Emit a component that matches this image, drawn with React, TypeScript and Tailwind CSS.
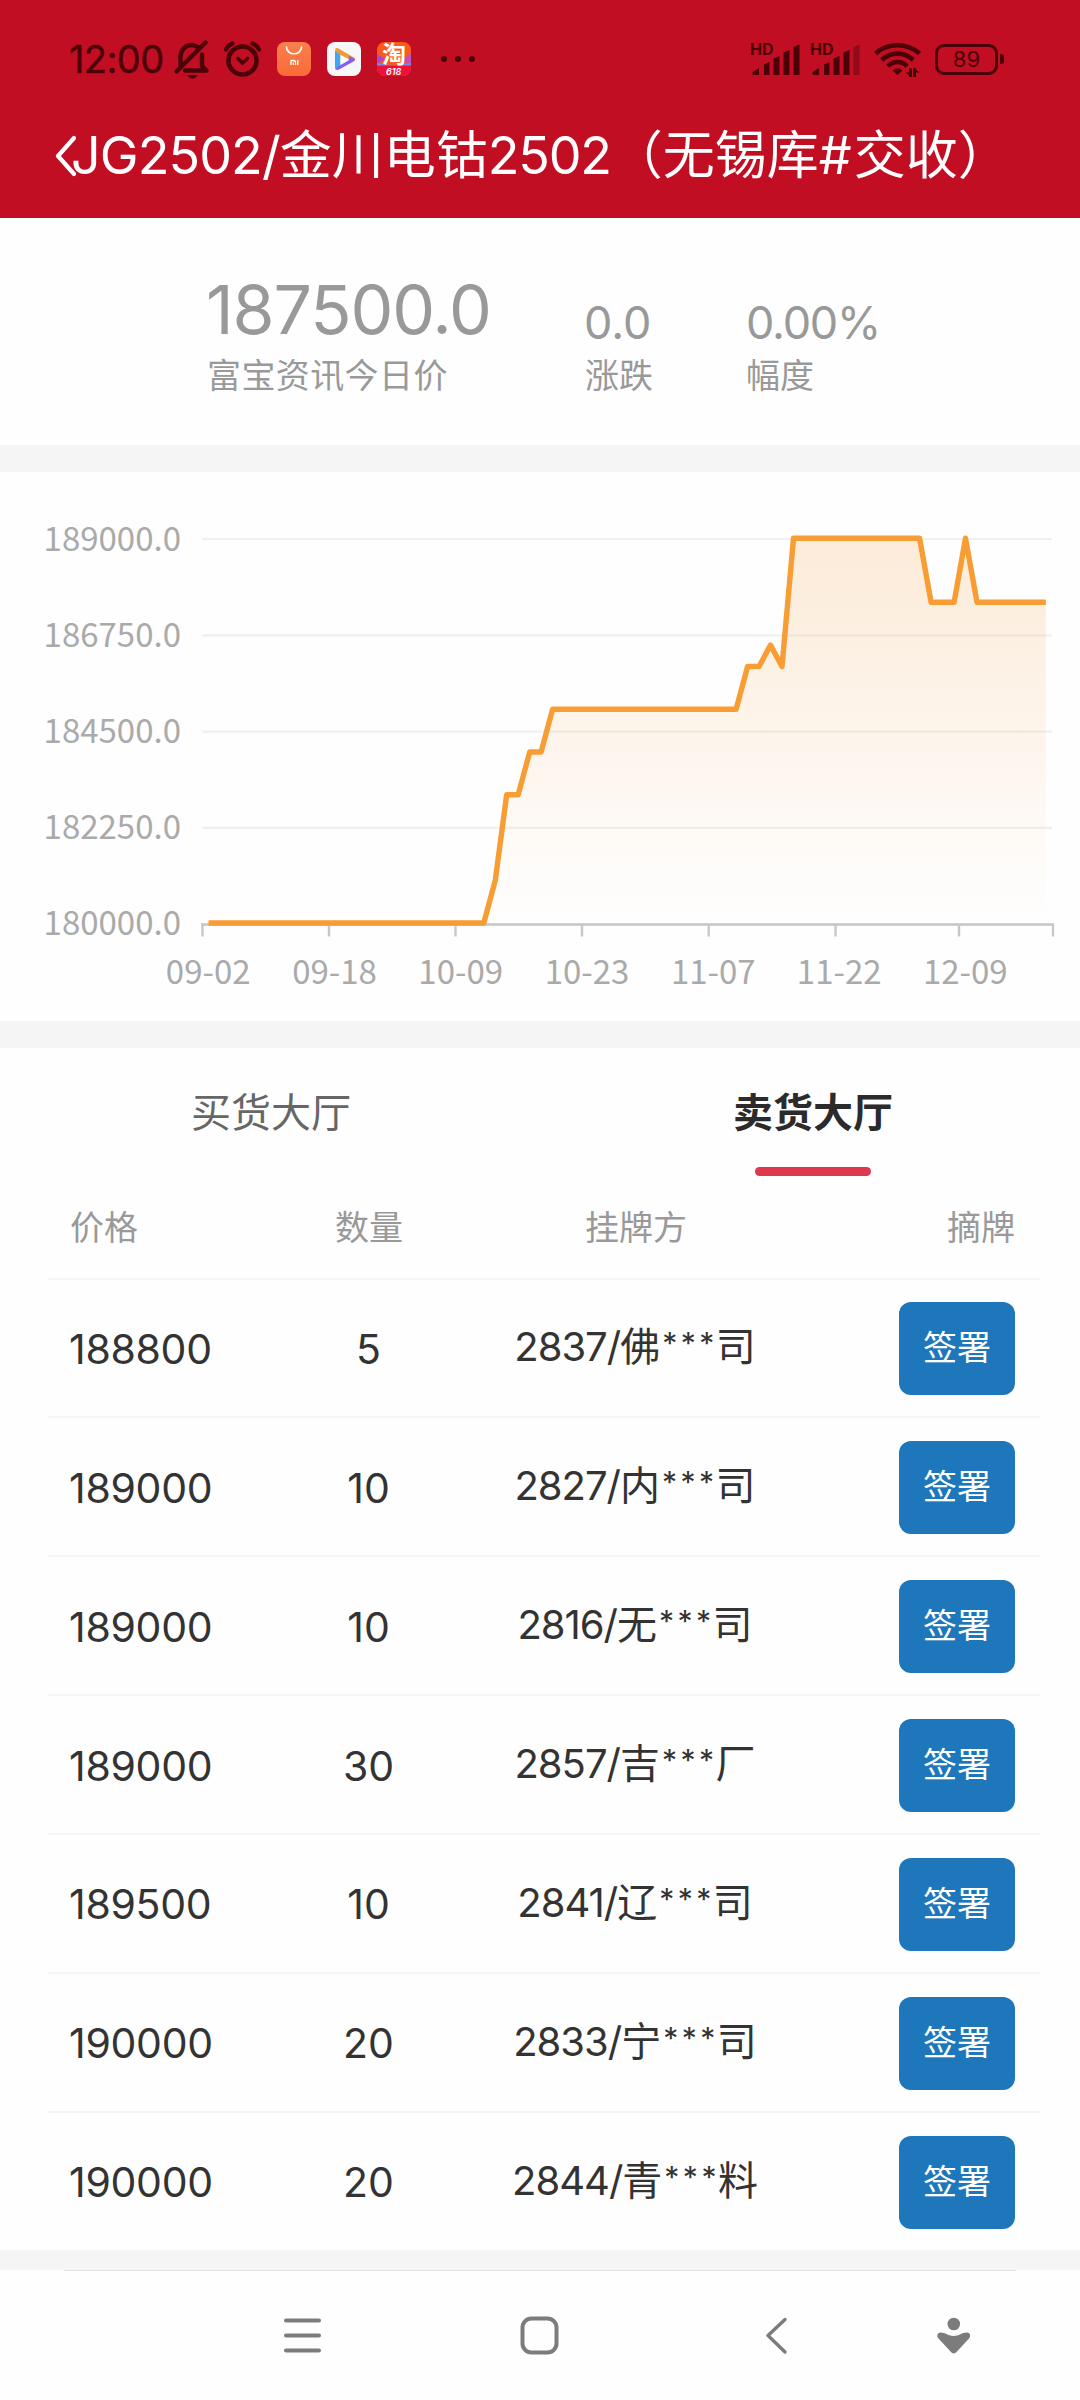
const INK = '#4a0208';

function StatusBar() {
  return (
    <div className="flex h-[118px] items-start justify-between pl-[69px] pr-[76px] pt-[34px] text-[#4a0208]">
      <div className="flex h-[50px] items-center">
        <span className="w-[101px] text-[38px] leading-[50px] tracking-[-0.6px] [-webkit-text-stroke:0.4px_#4a0208]">12:00</span>
        <svg width="44" height="40" viewBox="0 0 44 40" fill="none" stroke={INK} strokeWidth="4.4" strokeLinecap="round" strokeLinejoin="round">
          <path d="M10.5 26.5V18C10.5 11 15.5 6 21.500 6C24 6 26.500 7 28.500 8.500" />
          <path d="M32 15.500V27L36.500 31.500H15" />
          <path d="M6.500 32.500L35.500 3.500" />
          <path d="M17.500 36H27.500C26.500 38.500 24.500 39.500 22.500 39.500C20.500 39.500 18.500 38.500 17.500 36Z" fill={INK} stroke="none" />
        </svg>
        <svg className="ml-[8px]" width="42" height="40" viewBox="0 0 42 40" fill="none" stroke={INK} strokeLinecap="round" strokeLinejoin="round">
          <circle cx="20.500" cy="21.500" r="14" strokeWidth="4.600" />
          <path d="M16 19.500L20.500 24L25.500 19.500" strokeWidth="3.600" />
          <path d="M4 10.500C5.200 7.800 7.500 5.700 10.500 4.500" strokeWidth="4.200" />
          <path d="M37 10.500C35.800 7.800 33.500 5.700 30.500 4.500" strokeWidth="4.200" />
        </svg>
        <svg className="ml-[13px]" width="34" height="34" viewBox="0 0 34 34" fill="none">
          <defs>
            <linearGradient id="mi" x1="0" y1="0" x2="0" y2="1">
              <stop offset="0" stopColor="#f8804e" />
              <stop offset="1" stopColor="#fb6a35" />
            </linearGradient>
          </defs>
          <rect width="34" height="34" rx="8" fill="url(#mi)" />
          <path d="M9.500 5C9.500 14 24.500 14 24.500 5" stroke="#fff" strokeWidth="1.700" strokeLinecap="round" />
          <path d="M14 23V18.500H16.500Q18.500 18.500 18.500 20.500V23M16.300 20.500V23M20.800 18V23" stroke="#fff" strokeWidth="1.300" />
        </svg>
        <svg className="ml-[16px]" width="34" height="34" viewBox="0 0 34 34">
          <rect width="34" height="34" rx="8" fill="#f7f6f8" />
          <path d="M8 8.500Q8 5 11.500 6.500L27 15.500Q29 17 27.500 18.500L24 18L8.500 11Z" fill="#f29a35" />
          <path d="M8 9L13.500 13V25.500L10.500 28Q8 28.500 8 25.500Z" fill="#41a7ee" />
          <path d="M28 17Q28 18.500 26.500 19.500L12 27.500Q9 28.500 9.500 25.500L21.500 18.500L22 14Z" fill="#8c5cf0" />
          <path d="M13.500 13L21.500 17.500L13.500 22Z" fill="#fff" />
        </svg>
        <div className="relative ml-[16px] h-[34px] w-[34px]">
          <svg className="absolute inset-0" width="34" height="34" viewBox="0 0 34 34">
            <defs>
              <clipPath id="tao">
                <rect width="34" height="34" rx="8" />
              </clipPath>
            </defs>
            <g clipPath="url(#tao)">
              <rect width="34" height="34" fill="#fb5a1c" />
              <path d="M0 12L8 17L0 22Z" fill="#a54bd0" />
              <path d="M34 11L25 18L34 23Z" fill="#c04fc0" />
              <path d="M0 21Q17 25 34 21V24H0Z" fill="#6f8df0" />
              <rect y="23.500" width="34" height="11" fill="#f0103c" />
            </g>
          </svg>
          <span className="absolute left-[5px] top-0 text-[24px] font-bold leading-[25px] text-white">淘</span>
          <span className="absolute left-[9px] top-[24px] text-[9px] font-semibold italic leading-[11px] text-white">618</span>
        </div>
        <svg className="ml-[29px]" width="36" height="8" viewBox="0 0 36 8" fill={INK}>
          <circle cx="4" cy="4" r="3" />
          <circle cx="18" cy="4" r="3" />
          <circle cx="32" cy="4" r="3" />
        </svg>
      </div>

      <div className="flex h-[50px] items-center">
        <Signal full />
        <div className="w-[9px]" />
        <Signal />
        <svg className="ml-[13px]" width="48" height="36" viewBox="0 0 48 36" fill="none" stroke={INK} strokeWidth="4.600">
          <path d="M1.500 12.500C13.500 1.500 33.500 1.500 45.500 12.500" />
          <path d="M7.700 19C16.500 10.500 30.500 10.500 39.300 19" />
          <path d="M13.800 25.300C19 19.500 28 19.500 33.200 25.300" />
          <path d="M18.500 29.500Q23.500 25 28.500 29.500L23.500 34Z" fill={INK} stroke="none" />
          <path d="M36.500 27V36M40.500 36V27" strokeWidth="3" />
          <path d="M31.500 31.500H37V36ZM45.500 31.500H40V27Z" fill={INK} stroke="none" />
        </svg>
        <div className="ml-[13px] flex h-[31px] w-[63px] items-center justify-center rounded-[9px] border-[3.5px] border-[#4a0208] pb-px text-[22px] leading-none">
          89
        </div>
        <div className="ml-[2px] h-[10px] w-[4px] rounded-r-[3px] bg-[#4a0208]" />
      </div>
    </div>
  );
}

function Signal({ full = false }: { full?: boolean }) {
  return (
    <div className="relative h-[34px] w-[51px]">
      <span className="absolute left-0 top-0 text-[16px] font-bold leading-[14px]">HD</span>
      <svg className="absolute inset-0" width="51" height="34" viewBox="0 0 51 34" fill={INK}>
        <path d="M2.500 30L9 26V33H4Q2.500 33 2.500 31.500Z" />
        <path d="M14 22.500L19.500 20V33H14Z" />
        <path d="M23.500 16.500L29.500 14V33H23.500Z" />
        <path d="M33.500 10.500L39.500 8V33H33.500Z" />
        <path d="M43.500 5L49.500 2.500V33H43.500Z" opacity={full ? 1 : 0.4} />
      </svg>
    </div>
  );
}

function TitleBar() {
  return (
    <div className="flex h-[100px] items-center pb-[25px] pl-[54px] text-white">
      <svg width="22" height="42" viewBox="0 0 22 42" fill="none" stroke="#fff" strokeWidth="4.200" strokeLinecap="round" strokeLinejoin="round">
        <path d="M20 3L4 21L20 39" />
      </svg>
      <h1 className="-ml-[5px] whitespace-nowrap text-[52px] font-normal leading-[72px]">
        <span className="tracking-[-0.9px]">JG2502/</span>金川电钴<span className="tracking-[-1.2px]">2502</span>（无锡库<span className="tracking-[2px]">#</span>交收）
      </h1>
    </div>
  );
}

function Summary() {
  return (
    <section className="flex h-[227px] items-end pb-[51px] pl-[207px] text-[#999]">
      <div className="w-[378px]">
        <div className="-ml-[1px] text-[68px] leading-[72px] tracking-[-1.1px]">187500.0</div>
        <div className="mt-[13px] text-[34px] leading-[36px] tracking-[0.4px]">富宝资讯今日价</div>
      </div>
      <div className="w-[161px]">
        <div className="-ml-px text-[45px] leading-[50px]">0.0</div>
        <div className="mt-[10px] text-[34px] leading-[36px]">涨跌</div>
      </div>
      <div>
        <div className="text-[45px] leading-[50px] tracking-[-1.2px]">0.00%</div>
        <div className="mt-[10px] text-[34px] leading-[36px]">幅度</div>
      </div>
    </section>
  );
}

/* Runs of [price, number of trading days] */
const runs: [number, number][] = [
  [180000, 25], [181000, 1], [183000, 2], [184000, 2], [185000, 17],
  [186000, 2], [186500, 1], [186000, 1], [189000, 12], [187500, 3],
  [189000, 1], [187500, 7],
];
const prices = runs.flatMap(([v, n]) => Array.from({ length: n }, () => v));
const X0 = 208.5;
const STEP = 11.47;
const TOP = 472;
const yOf = (v: number) => 923 - TOP - ((v - 180000) / 9000) * 384.8;
const line = prices.map((v, i) => `${i ? 'L' : 'M'}${(X0 + i * STEP).toFixed(1)} ${yOf(v).toFixed(1)}`).join('');
const lastX = X0 + (prices.length - 1) * STEP;
const yLabels = ['189000.0', '186750.0', '184500.0', '182250.0', '180000.0'];
const xLabels: [string, number][] = [
  ['09-02', 208.2], ['09-18', 334.5], ['10-09', 460.7], ['10-23', 587],
  ['11-07', 713.3], ['11-22', 839.2], ['12-09', 965.3],
];
const ticks = [202.5, 329, 455.5, 582, 708.7, 835.5, 959, 1053];

function Chart() {
  return (
    <svg className="block" width="1080" height="549" viewBox="0 0 1080 549" fontFamily='"Noto Sans CJK SC", sans-serif' fontSize="33" fill="#aaa">
      <defs>
        <linearGradient id="area" gradientUnits="userSpaceOnUse" x1="0" y1="66" x2="0" y2="451">
          <stop offset="0" stopColor="#f49a38" stopOpacity="0.19" />
          <stop offset="1" stopColor="#f49a38" stopOpacity="0" />
        </linearGradient>
      </defs>
      {yLabels.map((t, i) => (
        <g key={t}>
          <text x="181" y={78.5 + i * 96.2} textAnchor="end">{t}</text>
          {i < 4 && <path d={`M202 ${67 + i * 96.3}H1052`} stroke="#f0f0f0" strokeWidth="2.200" />}
        </g>
      ))}
      <path d={`${line}L${lastX} 452L${X0} 452Z`} fill="url(#area)" />
      <path d="M201 452.500H1054" stroke="#c4c4c4" strokeWidth="2.600" />
      {ticks.map((x) => (
        <path key={x} d={`M${x} 452V464.500`} stroke="#c8c8c8" strokeWidth="2.400" />
      ))}
      <path d={line} fill="none" stroke="#f89c34" strokeWidth="5.400" strokeLinejoin="round" />
      {xLabels.map(([t, x]) => (
        <text key={t} x={x} y="512" textAnchor="middle">{t}</text>
      ))}
    </svg>
  );
}

/* [price, quantity, member number, first and last character of the company] */
const orders = [
  ['188800', '5', '2837', '佛', '司'],
  ['189000', '10', '2827', '内', '司'],
  ['189000', '10', '2816', '无', '司'],
  ['189000', '30', '2857', '吉', '厂'],
  ['189500', '10', '2841', '辽', '司'],
  ['190000', '20', '2833', '宁', '司'],
  ['190000', '20', '2844', '青', '料'],
];

function Market() {
  return (
    <section className="h-[1202px] bg-[#fefefe]">
      <div className="grid h-[128px] grid-cols-[542px_542px] pt-[41px] text-center text-[40px] leading-[48px]">
        <div className="text-[#666]">买货大厅</div>
        <div className="flex flex-col items-center font-bold text-[#2b2b2b]">
          卖货大厅
          <span className="mt-[30px] h-[9px] w-[116px] rounded-full bg-[#dd384e]" />
        </div>
      </div>
      <div className="pl-[48px] pr-[40px]">
        <div className="grid h-[101.5px] grid-cols-[155px_288px_246px_1fr] items-start pl-[22px] pr-[25px] pt-[32px] text-[34px] leading-[40px] text-[#999]">
          <span>价格</span>
          <span className="text-center">数量</span>
          <span className="text-center">挂牌方</span>
          <span className="text-right">摘牌</span>
        </div>
        {orders.map(([price, qty, member, head, tail], i) => (
          <div key={i} className="grid h-[138.860px] grid-cols-[155px_288px_246px_1fr] items-center whitespace-nowrap border-t-2 border-[#f5f5f5] pl-[21px] pr-[25px] pt-[2px] text-[41px] leading-[50px] text-[#333]">
            <span className="tracking-[-0.3px]">{price}</span>
            <span className="pl-px text-center">{qty}</span>
            <span className="text-center text-[40px]">
              <span className="tracking-[-1px]">{member}/</span>{head}
              <span className="relative -top-[7px] left-[2px] text-[30px] tracking-[3.5px]">***</span>{tail}
            </span>
            <button className="h-[93px] w-[116px] justify-self-end rounded-[12px] bg-[#1f77bb] pb-px text-[34px] leading-[40px] text-white">签署</button>
          </div>
        ))}
      </div>
    </section>
  );
}

function NavBar() {
  const c = '#7c7c7c';
  return (
    <nav className="flex h-[130px] flex-col bg-[#fefefe] px-[64px]">
      <div className="h-px bg-[#e2e2e2]" />
      <div className="flex pl-[218px] pt-[43px]">
        <svg width="42" height="42" viewBox="0 0 42 42" stroke={c} strokeWidth="4" strokeLinecap="round">
          <path d="M4 6.500H37M4 21.500H37M4 36.500H37" />
        </svg>
        <svg className="ml-[194px]" width="42" height="42" viewBox="0 0 42 42" fill="none" stroke={c} strokeWidth="4">
          <rect x="4.500" y="4.500" width="34" height="34" rx="9" />
        </svg>
        <svg className="ml-[198px]" width="32" height="42" viewBox="0 0 32 42" fill="none" stroke={c} strokeWidth="3.400" strokeLinecap="round" strokeLinejoin="round">
          <path d="M27 5.500L10 21.500L27 38" />
        </svg>
        <svg className="ml-[143px]" width="42" height="42" viewBox="0 0 42 42" fill={c}>
          <circle cx="20.800" cy="10" r="6.300" />
          <path d="M7.500 18.500C12 18.500 16 22 20.800 22C25.500 22 29 18.500 34 18.500C37.500 19 38 22.500 36 24.500L24 37.500C22 40 19.500 40 17.500 37.500L5.500 24.500C3.500 22.500 4 19 7.500 18.500Z" />
        </svg>
      </div>
    </nav>
  );
}

export default function App() {
  return (
    <div className="flex h-[2400px] w-[1080px] flex-col overflow-hidden bg-[#fefefe] font-['Inter','Noto_Sans_CJK_SC',sans-serif]">
      <header className="h-[218px] bg-[#c20e22]">
        <StatusBar />
        <TitleBar />
      </header>
      <Summary />
      <div className="h-[27px] bg-[#f5f5f5]" />
      <Chart />
      <div className="h-[27px] bg-[#f5f5f5]" />
      <Market />
      <div className="h-[20px] bg-[#f5f5f5]" />
      <NavBar />
    </div>
  );
}
